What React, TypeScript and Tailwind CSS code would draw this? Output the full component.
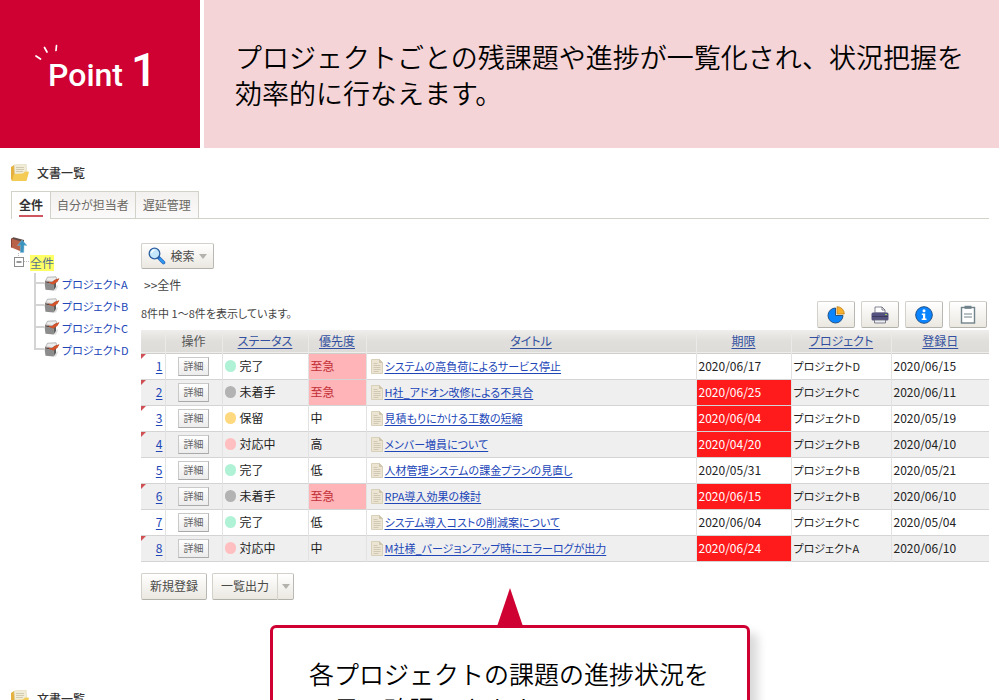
import type { ReactNode } from "react";
import clsx from "clsx";

type IssueType = {
  id: number;
  status: string;
  priority: string;
  title: string;
  due: string;
  overdue: boolean;
  project: string;
  created: string;
  flagged: boolean;
};

const ISSUE_LIST: IssueType[] = [
  {
    id: 1,
    status: "完了",
    priority: "至急",
    title: "システムの高負荷によるサービス停止",
    due: "2020/06/17",
    overdue: false,
    project: "プロジェクトD",
    created: "2020/06/15",
    flagged: true,
  },
  {
    id: 2,
    status: "未着手",
    priority: "至急",
    title: "H社_アドオン改修による不具合",
    due: "2020/06/25",
    overdue: true,
    project: "プロジェクトC",
    created: "2020/06/11",
    flagged: true,
  },
  {
    id: 3,
    status: "保留",
    priority: "中",
    title: "見積もりにかける工数の短縮",
    due: "2020/06/04",
    overdue: true,
    project: "プロジェクトD",
    created: "2020/05/19",
    flagged: true,
  },
  {
    id: 4,
    status: "対応中",
    priority: "高",
    title: "メンバー増員について",
    due: "2020/04/20",
    overdue: true,
    project: "プロジェクトB",
    created: "2020/04/10",
    flagged: true,
  },
  {
    id: 5,
    status: "完了",
    priority: "低",
    title: "人材管理システムの課金プランの見直し",
    due: "2020/05/31",
    overdue: false,
    project: "プロジェクトB",
    created: "2020/05/21",
    flagged: false,
  },
  {
    id: 6,
    status: "未着手",
    priority: "至急",
    title: "RPA導入効果の検討",
    due: "2020/06/15",
    overdue: true,
    project: "プロジェクトB",
    created: "2020/06/10",
    flagged: true,
  },
  {
    id: 7,
    status: "完了",
    priority: "低",
    title: "システム導入コストの削減案について",
    due: "2020/06/04",
    overdue: false,
    project: "プロジェクトC",
    created: "2020/05/04",
    flagged: false,
  },
  {
    id: 8,
    status: "対応中",
    priority: "中",
    title: "M社様_バージョンアップ時にエラーログが出力",
    due: "2020/06/24",
    overdue: true,
    project: "プロジェクトA",
    created: "2020/06/10",
    flagged: true,
  },
];

const PROJECTS = ["プロジェクトA", "プロジェクトB", "プロジェクトC", "プロジェクトD"];

const STATUS_TO_DOT: Record<string, string> = {
  完了: "bg-[#b0f2d6]",
  未着手: "bg-[#b3b3b3]",
  保留: "bg-[#ffd97f]",
  対応中: "bg-[#ffbfc1]",
};

const COLUMNS = [
  { label: "", width: "w-[24px]", link: false },
  { label: "操作", width: "w-[57px]", link: false },
  { label: "ステータス", width: "w-[86px]", link: true },
  { label: "優先度", width: "w-[58px]", link: true },
  { label: "タイトル", width: "", link: true },
  { label: "期限", width: "w-[95px]", link: true },
  { label: "プロジェクト", width: "w-[100px]", link: true },
  { label: "登録日", width: "w-[98px]", link: true },
];

const BUTTON =
  "flex items-center justify-center border border-[#d3d1ca] border-r-[#bab8b2] border-b-[#b3b1ab] rounded-xs bg-gradient-to-b from-white to-[#ebe8e1] text-[#4a4a48]";

const FolderIcon = () => (
  <svg width="18" height="18" viewBox="0 0 18 18" aria-hidden="true">
    <path d="M0 3l3-2 2 1 1 14-5 1L0 15z" fill="#e5b13e" />
    <path d="M3 1l12-1 1 9-12 3z" fill="#f1ecd8" stroke="#dfd6b5" strokeWidth=".6" />
    <path d="M5 3.500h8M5 5.500h8M5 7.500h7" stroke="#c9c1a4" strokeWidth=".8" />
    <path d="M1 17l2-7 9-.5 2-2 4 .3L15.500 17z" fill="#f3cb55" />
  </svg>
);

const BookIcon = () => (
  <svg width="16" height="16" viewBox="0 0 16 16" aria-hidden="true">
    <path d="M.5 1.500l2-1.200L13 3v8l-2.500 3z" fill="#5f4a45" />
    <path d="M.5 1.500L10 4.500v10L.5 10.500z" fill="#b9624a" />
    <path d="M.5 1.500v9" stroke="#8a4332" />
    <path d="M11 3l5 5.500-3-.3-.2 7.300H9.300l.2-7.300-3 .3z" fill="#3b93bf" stroke="#86c0da" strokeWidth=".5" />
  </svg>
);

const BoxIcon = () => (
  <svg width="16" height="16" viewBox="0 0 16 16" aria-hidden="true">
    <path d="M9 14.500l3-3 1-3 1 2-2 4z" fill="#ddd" />
    <path d="M.5 6.500l9 1.500v6.500l-8-.8z" fill="#8c8c8c" />
    <path d="M9.500 8L12 6v5l-2.500 3.500z" fill="#5e5e5e" />
    <path d="M3.500 1.200L12 .8l1 2.700-4 2.200-7.500-.8z" fill="#ececec" stroke="#8d8d8d" strokeWidth=".6" />
    <path d="M1 5.200l7 1L10.500 4l4.500-1.500-2 3.200-3 2.500-9-1.700z" fill="#5a4540" />
    <path d="M4 5.600l4 .6L10.500 4l5-1.800-2 3.500L9.500 8.400 6 7.200z" fill="#d4532b" />
  </svg>
);

const DocIcon = () => (
  <svg width="12" height="15" viewBox="0 0 12 15" aria-hidden="true" className="shrink-0">
    <path d="M.5.5h8l3 3v11H.5z" fill="#ece5d4" stroke="#d9d0ba" />
    <path d="M8.500.5v3h3" fill="#cfc5ac" stroke="#cfc5ac" />
    <path d="M2.500 4.500h4M2.500 6.500h7M2.500 8.500h7M2.500 10.500h7M2.500 12.500h5" stroke="#c9c0aa" strokeWidth=".8" />
  </svg>
);

const SearchIcon = () => (
  <svg width="18" height="18" viewBox="0 0 18 18" aria-hidden="true">
    <path d="M10.500 10.500l5 5" stroke="#2b6cc4" strokeWidth="3.600" strokeLinecap="round" />
    <path d="M12 12l3.500 3.500" stroke="#2f9bf0" strokeWidth="1.800" strokeLinecap="round" />
    <circle cx="6.500" cy="6.500" r="5.300" fill="#c5e7fb" stroke="#2d5f9e" strokeWidth="1.300" />
    <path d="M3.500 6a3.200 3.200 0 0 1 3-2.800" fill="none" stroke="#fff" strokeWidth="1.200" />
  </svg>
);

const PieIcon = () => (
  <svg width="18" height="18" viewBox="0 0 18 18" aria-hidden="true">
    <path d="M8.500 2v7.500h7.500A7.500 7.500 0 1 1 8.500 2z" fill="#0a84ff" stroke="#27527f" />
    <path d="M10 .7A7.200 7.200 0 0 1 17.300 8H10z" fill="#fbb02d" stroke="#c0841c" strokeWidth=".8" />
  </svg>
);

const PrinterIcon = () => (
  <svg width="18" height="18" viewBox="0 0 18 18" aria-hidden="true">
    <path d="M4 7V1h7l3 3v3z" fill="#fff" stroke="#667" strokeWidth=".8" />
    <path d="M11 1v3h3" fill="none" stroke="#667" strokeWidth=".8" />
    <rect x=".5" y="6.500" width="17" height="8" rx="1.500" fill="#56527f" />
    <path d="M1 10.500h16" stroke="#3c395e" />
    <rect x="14" y="8" width="2" height="1" fill="#8fd14f" />
    <path d="M3.500 14h11v3h-11z" fill="#e9edf0" stroke="#667" strokeWidth=".8" />
  </svg>
);

const InfoIcon = () => (
  <svg width="18" height="18" viewBox="0 0 18 18" aria-hidden="true">
    <circle cx="9" cy="9" r="8.300" fill="#0a84ff" stroke="#1d5088" />
    <circle cx="9" cy="4.800" r="1.500" fill="#fff" />
    <path d="M6.800 7.500h3.400v5h1.300V14H6.700v-1.500h1.300V9H6.800z" fill="#fff" />
  </svg>
);

const ClipboardIcon = () => (
  <svg width="16" height="19" viewBox="0 0 16 19" aria-hidden="true">
    <rect x="1.500" y="2.500" width="13" height="15.500" fill="#fff" stroke="#71838a" strokeWidth="1.400" />
    <rect x="4.500" y=".8" width="7" height="3" fill="#71838a" />
    <path d="M4 9h8M4 12h8" stroke="#71838a" strokeWidth="1.200" />
  </svg>
);

const Caret = () => (
  <svg width="8" height="5" viewBox="0 0 8 5" aria-hidden="true">
    <path d="M0 0h8L4 5z" fill="#b4b2ad" />
  </svg>
);

const TOOLS: { label: string; icon: ReactNode }[] = [
  { label: "集計", icon: <PieIcon /> },
  { label: "印刷", icon: <PrinterIcon /> },
  { label: "情報", icon: <InfoIcon /> },
  { label: "クリップボード", icon: <ClipboardIcon /> },
];

const PointHeader = () => (
  <header className="flex gap-1 h-[148px] shrink-0 pr-px">
    <div className="w-[200px] shrink-0 bg-[#cf0032] text-white flex items-start pl-[34px] pt-11">
      <svg width="24" height="18" viewBox="0 0 24 18" aria-hidden="true" className="shrink-0">
        <path
          d="M2 12l4.500 3M10.500 3.500l2.500 4.500M22.500 1.500l-.5 5"
          stroke="#fff"
          strokeWidth="1.700"
          strokeLinecap="round"
        />
      </svg>
      <h1 className="-ml-2.5 font-['Roboto',sans-serif] font-medium text-[32px] leading-[52px] whitespace-nowrap flex items-baseline gap-2">
        Point <span className="text-[46px]">1</span>
      </h1>
    </div>
    <p className="flex-1 bg-[#f4d4d6] text-black font-[350] text-[27px] leading-9 pl-[31px] pt-[39px]">
      プロジェクトごとの残課題や進捗が一覧化され、状況把握を
      <br />
      効率的に行なえます。
    </p>
  </header>
);

const ListHeading = () => (
  <h2 className="flex items-center gap-2 h-[18px] text-[12px] font-medium text-[#333]">
    <FolderIcon />
    文書一覧
  </h2>
);

const Tabs = () => (
  <nav className="flex h-7 border-b border-[#d2d2c8] text-[12px] mt-[9px] text-[#6b6963]">
    <button className="h-7 px-[7px] border border-b-0 border-[#d2d2c8] bg-white font-bold text-[#333]">
      <span className="block leading-5 border-b-2 border-[#cf5560]">全件</span>
    </button>
    <button className="px-1.5 border border-l-0 border-b-0 border-[#d2d2c8] bg-gradient-to-b from-[#f3f1ef] to-[#fbfafa]">
      自分が担当者
    </button>
    <button className="px-[7px] border border-l-0 border-b-0 border-[#d2d2c8] bg-gradient-to-b from-[#f3f1ef] to-[#fbfafa]">
      遅延管理
    </button>
  </nav>
);

const ProjectTree = () => (
  <aside className="w-[130px] shrink-0 text-[12px] text-[#2146b8] whitespace-nowrap">
    <BookIcon />
    <div className="flex items-center h-5 pl-[3px]">
      <svg width="16" height="20" viewBox="0 0 16 20" aria-hidden="true">
        <path d="M4.500 0v4M10 8.500h5" stroke="#bbb" strokeDasharray="1 1" />
        <rect x=".5" y="4.500" width="9" height="9" fill="#fff" stroke="#8c8c8c" />
        <path d="M2.500 9h5" stroke="#333" />
      </svg>
      <a href="#all" className="bg-[#ffff66] leading-4 text-[#56718c]">
        全件
      </a>
    </div>
    <ul className="pl-[23px]">
      {PROJECTS.map((name, key) => (
        <li key={key} className="flex items-center h-[22px]">
          <svg width="10" height="22" viewBox="0 0 10 22" aria-hidden="true">
            <path
              d={key === PROJECTS.length - 1 ? "M1 0v10h9" : "M1 0v22M1 10h9"}
              fill="none"
              stroke="#d4d4d4"
              strokeWidth="2"
            />
          </svg>
          <BoxIcon />
          <a href={`#${name}`} className="pl-0.5 text-[11px]">
            {name}
          </a>
        </li>
      ))}
    </ul>
  </aside>
);

const IssueRow = (item: IssueType) => {
  const cell = "border-r border-[#e2e2e2] pl-0.5";
  return (
    <tr className="h-[26px] border-b border-[#d4d4d4] even:bg-[#efefef]">
      <td className="border-r border-[#e2e2e2] p-0">
        <div className="flex items-start justify-between h-[25px] pr-0.5">
          <svg width="5" height="5" viewBox="0 0 5 5" aria-hidden="true">
            {item.flagged && <path d="M0 0h5L0 5z" fill="#cf4f55" />}
          </svg>
          <a href={`#issue-${item.id}`} className="leading-6 text-[#2146b8] underline underline-offset-2">
            {item.id}
          </a>
        </div>
      </td>
      <td className="border-r border-[#e2e2e2] p-0">
        <button className="mx-auto flex items-center justify-center w-[31px] h-[19px] border border-[#c9c9c9] border-b-[#a9a9a9] border-r-[#b4b4b4] bg-gradient-to-b from-white to-[#ececec] text-[10px] text-[#666]">
          詳細
        </button>
      </td>
      <td className={cell}>
        <span className="flex items-center gap-1">
          <span className={clsx("w-[11px] h-3 rounded-full", STATUS_TO_DOT[item.status])} />
          {item.status}
        </span>
      </td>
      <td className={clsx(cell, item.priority === "至急" && "bg-[#ffb5b7] text-[#c22f38]")}>
        {item.priority}
      </td>
      <td className="border-r border-[#e2e2e2] pl-1">
        <span className="flex items-center gap-[2px]">
          <DocIcon />
          <a href={`#issue-${item.id}`} className="text-[11px] text-[#2146b8] underline underline-offset-2">
            {item.title}
          </a>
        </span>
      </td>
      <td className={clsx(cell, item.overdue && "bg-[#ff1a1c] text-white")}>{item.due}</td>
      <td className={clsx(cell, "text-[11px]")}>{item.project}</td>
      <td className="pl-0.5">{item.created}</td>
    </tr>
  );
};

const IssueTable = () => (
  <table className="w-full table-fixed border-collapse text-[12px] leading-4 text-[#222] whitespace-nowrap">
    <thead>
      <tr className="h-[23px] bg-gradient-to-b from-[#efeeec] via-[#e0dfdb] to-[#dddcd8] border-b border-[#cfcecb] text-[#555]">
        {COLUMNS.map((col, key) => (
          <th
            key={key}
            scope="col"
            className={clsx("p-0 font-normal border-r border-[#ebeae8] last:border-r-0", col.width)}
          >
            {col.link ? (
              <a href={`#sort-${key}`} className="text-[#3350a0] underline underline-offset-2">
                {col.label}
              </a>
            ) : (
              col.label
            )}
          </th>
        ))}
      </tr>
    </thead>
    <tbody>
      {ISSUE_LIST.map((item) => (
        <IssueRow key={item.id} {...item} />
      ))}
    </tbody>
  </table>
);

const Callout = () => (
  <div className="absolute top-full left-[27%] w-[48%] -mt-3 [font-feature-settings:normal]">
    <svg width="26" height="37" viewBox="0 0 26 37" aria-hidden="true" className="mx-auto">
      <path d="M13 0l12.500 37H.5z" fill="#cf0032" />
    </svg>
    <p className="border-3 border-[#cf0032] rounded-md bg-white shadow-[8px_8px_10px_rgba(0,0,0,0.15)] px-9 pt-7 pb-8 font-[350] text-[25px] leading-[35px] text-black">
      各プロジェクトの課題の進捗状況を
      <br />
      一目で確認できます。
    </p>
  </div>
);

const App = () => {
  return (
    <div className="h-screen overflow-hidden flex flex-col bg-white font-['Noto_Sans_CJK_JP',sans-serif]">
      <PointHeader />
      <section className="relative shrink-0 pl-[11px] pr-[11px] pt-4 [font-feature-settings:'palt']">
        <ListHeading />
        <Tabs />
        <div className="flex pt-[18px]">
          <ProjectTree />
          <main className="flex-1 min-w-0 pt-1.5 text-[12px] text-[#444]">
            <button className={clsx(BUTTON, "h-[26px] w-[73px] gap-1")}>
              <SearchIcon />
              検索
              <Caret />
            </button>
            <p className="pl-[3px] mt-2 leading-4">&gt;&gt;全件</p>
            <div className="flex items-start justify-between pr-0.5 mt-2">
              <p className="leading-6 text-[11px]">8件中 1～8件を表示しています。</p>
              <div className="flex gap-1.5">
                {TOOLS.map((tool) => (
                  <button key={tool.label} aria-label={tool.label} className={clsx(BUTTON, "w-[38px] h-[27px]")}>
                    {tool.icon}
                  </button>
                ))}
              </div>
            </div>
            <div className="mt-0.5">
              <IssueTable />
            </div>
            <div className="flex gap-[5px] mt-[11px]">
              <button className={clsx(BUTTON, "h-[27px] px-2")}>新規登録</button>
              <div className="flex">
                <button className={clsx(BUTTON, "h-[27px] px-2 rounded-r-none border-r-0")}>一覧出力</button>
                <button aria-label="出力形式" className={clsx(BUTTON, "h-[27px] w-[17px] rounded-l-none")}>
                  <Caret />
                </button>
              </div>
            </div>
          </main>
        </div>
        <Callout />
      </section>
      <section className="shrink-0 px-[11px] mt-[90px] [font-feature-settings:'palt']">
        <ListHeading />
      </section>
    </div>
  );
};

export default App;
